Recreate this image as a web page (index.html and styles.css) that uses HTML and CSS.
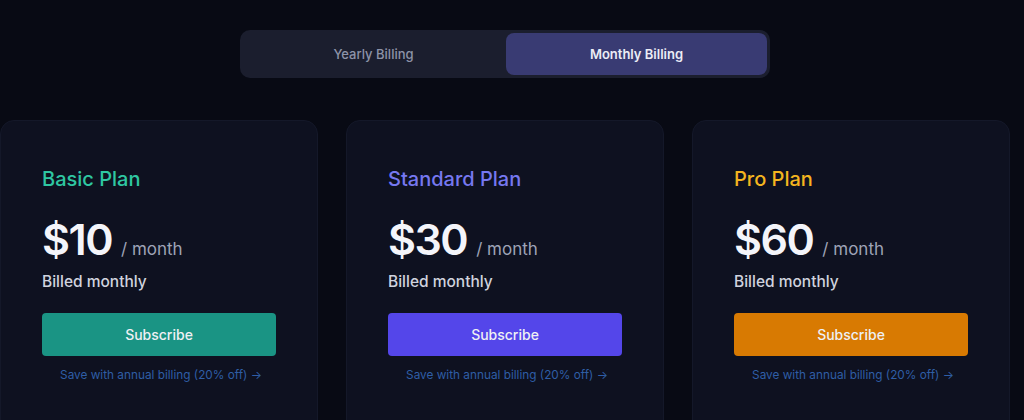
FILE: index.html
```html
<!DOCTYPE html>
<html lang="en">
<head>
<meta charset="utf-8">
<title>Pricing</title>
<link rel="stylesheet" href="styles.css">
</head>
<body>
<div class="page">
  <div class="toggle-wrap">
    <div class="toggle">
      <button class="tab">Yearly Billing</button>
      <button class="tab active">Monthly Billing</button>
    </div>
  </div>
  <div class="cards">
    <div class="card">
      <h2 class="title basic">Basic Plan</h2>
      <div class="price"><span class="amount">$10</span><span class="per">/ month</span></div>
      <p class="billed">Billed monthly</p>
      <button class="subscribe btn-basic">Subscribe</button>
      <a class="save" href="#">Save with annual billing (20% off) →</a>
    </div>
    <div class="card">
      <h2 class="title standard">Standard Plan</h2>
      <div class="price"><span class="amount">$30</span><span class="per">/ month</span></div>
      <p class="billed">Billed monthly</p>
      <button class="subscribe btn-standard">Subscribe</button>
      <a class="save" href="#">Save with annual billing (20% off) →</a>
    </div>
    <div class="card">
      <h2 class="title pro">Pro Plan</h2>
      <div class="price"><span class="amount">$60</span><span class="per">/ month</span></div>
      <p class="billed">Billed monthly</p>
      <button class="subscribe btn-pro">Subscribe</button>
      <a class="save" href="#">Save with annual billing (20% off) →</a>
    </div>
  </div>
</div>
</body>
</html>
```

FILE: styles.css
```css
html, body {
  margin: 0;
  padding: 0;
  background: #080a14;
  font-family: Inter, "Noto Sans", "Liberation Sans", sans-serif;
  color: #e6e8f0;
  overflow: hidden;
}
.page {
  width: 1010px;
  padding-top: 30px;
}
.toggle-wrap {
  display: flex;
  justify-content: center;
}
.toggle {
  display: flex;
  gap: 2px;
  width: 530px;
  height: 48px;
  box-sizing: border-box;
  padding: 3px;
  background: #1b1e2e;
  border-radius: 10px;
}
.tab {
  flex: 1;
  border: none;
  background: transparent;
  color: #8d93a8;
  font-family: inherit;
  font-size: 13px;
  font-weight: 500;
  border-radius: 8px;
  cursor: pointer;
}
.tab.active {
  background: #393b73;
  color: #ecedf6;
  font-weight: 600;
}
.cards {
  display: flex;
  gap: 28px;
  margin-top: 42px;
}
.card {
  width: 318px;
  height: 320px;
  box-sizing: border-box;
  padding: 44px 41px 0 41px;
  background: #0e1120;
  border: 1px solid #141829;
  border-radius: 14px;
  display: flex;
  flex-direction: column;
  align-items: flex-start;
}
.title {
  margin: 0;
  font-size: 20px;
  font-weight: 500;
  line-height: 28px;
}
.basic { color: #2fc7a2; }
.standard { color: #7678f0; }
.pro { color: #f4b51f; }
.price {
  display: flex;
  align-items: baseline;
  margin-top: 20px;
  height: 52px;
}
.amount {
  font-size: 43px;
  font-weight: 600;
  color: #f4f5fa;
  letter-spacing: -1.5px;
}
.per {
  margin-left: 9px;
  font-size: 17px;
  color: #9ea3b6;
}
.billed {
  margin: 6px 0 0 0;
  font-size: 15.5px;
  font-weight: 500;
  color: #d0d3de;
  line-height: 22px;
}
.subscribe {
  margin-top: 20px;
  width: 234px;
  height: 43px;
  border: none;
  border-radius: 4px;
  color: #eef0f4;
  font-family: inherit;
  font-size: 14px;
  font-weight: 500;
  cursor: pointer;
}
.btn-basic { background: #1a9484; }
.btn-standard { background: #5446ea; }
.btn-pro { background: #d87a02; }
.save {
  margin-top: 12px;
  width: 234px;
  padding-left: 4px;
  box-sizing: border-box;
  text-align: center;
  font-size: 11.8px;
  color: #2f5ea6;
  text-decoration: none;
}
```
